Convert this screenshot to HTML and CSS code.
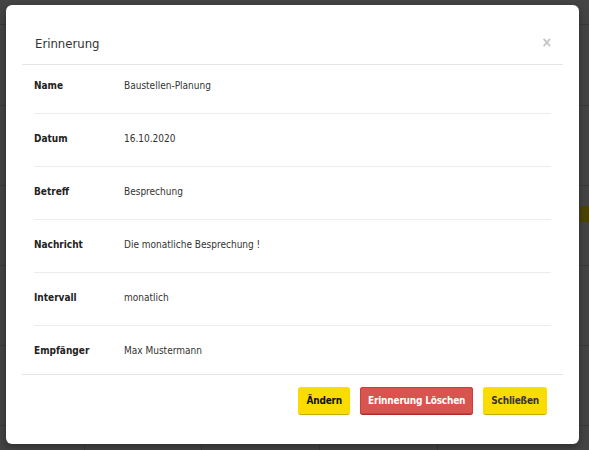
FILE: index.html
```html
<!DOCTYPE html>
<html lang="de">
<head>
<meta charset="utf-8">
<title>Erinnerung</title>
<link rel="stylesheet" href="styles.css">
</head>
<body>
<div class="backdrop">
  <div class="modal">
    <div class="modal-header">
      <h4 class="modal-title">Erinnerung</h4>
      <span class="close">&times;</span>
    </div>
    <div class="modal-body">
      <div class="row first"><div class="label">Name</div><div class="value">Baustellen-Planung</div></div>
      <div class="row"><div class="label">Datum</div><div class="value">16.10.2020</div></div>
      <div class="row"><div class="label">Betreff</div><div class="value">Besprechung</div></div>
      <div class="row"><div class="label">Nachricht</div><div class="value">Die monatliche Besprechung !</div></div>
      <div class="row"><div class="label">Intervall</div><div class="value">monatlich</div></div>
      <div class="row last"><div class="label">Empfänger</div><div class="value">Max Mustermann</div></div>
    </div>
    <div class="modal-footer">
      <button class="btn btn-yellow">Ändern</button>
      <button class="btn btn-red">Erinnerung Löschen</button>
      <button class="btn btn-yellow btn-dark-text">Schließen</button>
    </div>
  </div>
</div>
</body>
</html>
```
FILE: styles.css
```css
html, body {
  margin: 0;
  padding: 0;
}
body {
  width: 589px;
  height: 450px;
  overflow: hidden;
  font-family: "DejaVu Sans", sans-serif;
  font-stretch: condensed;
  background-color: #444444;
  background-image:
    linear-gradient(#4b4400, #4b4400),
    linear-gradient(to bottom, transparent 24px, #393939 24px, #393939 25px, transparent 25px,
      transparent 105px, #393939 105px, #393939 106px, transparent 106px,
      transparent 185px, #393939 185px, #393939 186px, transparent 186px,
      transparent 265px, #393939 265px, #393939 266px, transparent 266px,
      transparent 345px, #393939 345px, #393939 346px, transparent 346px,
      transparent 425px, #393939 425px, #393939 426px, transparent 426px),
    linear-gradient(to right, transparent 84px, #393939 84px, #393939 85px, transparent 85px,
      transparent 201px, #393939 201px, #393939 202px, transparent 202px,
      transparent 319px, #393939 319px, #393939 320px, transparent 320px,
      transparent 437px, #393939 437px, #393939 438px, transparent 438px);
  background-size: 10px 16px, 100% 100%, 100% 6px;
  background-position: 580px 206px, 0 0, 0 444px;
  background-repeat: no-repeat;
}
.backdrop {
  padding: 5px 0 0 6px;
}
.modal {
  width: 573px;
  height: 439px;
  background: #ffffff;
  border-radius: 6px;
  box-shadow: 0 3px 9px rgba(0, 0, 0, 0.35);
  box-sizing: border-box;
}
.modal-header {
  margin: 0 16px;
  height: 60px;
  border-bottom: 1px solid #e5e5e5;
  display: flex;
  align-items: flex-start;
  justify-content: space-between;
  padding: 30px 11px 0 13px;
  box-sizing: border-box;
}
.modal-title {
  margin: 0;
  font-size: 13px;
  font-weight: normal;
  color: #333333;
  line-height: 18px;
}
.close {
  font-size: 14px;
  font-weight: bold;
  color: #c4c4c4;
  line-height: 16px;
  margin-top: -1px;
}
.modal-body {
  margin: 0 28px;
}
.row {
  display: grid;
  grid-template-columns: 90px 1fr;
  padding: 18px 0 21px;
  border-top: 1px solid #ececec;
  font-size: 10px;
  line-height: 13px;
  color: #333333;
}
.row.first {
  border-top: none;
  padding-top: 14px;
}
.row.last {
  padding-bottom: 17px;
}
.label {
  font-weight: bold;
  color: #222222;
}
.value {
  color: #333333;
}
.modal-footer {
  margin: 0 16px;
  border-top: 1px solid #e5e5e5;
  padding: 12px 16px 0 0;
  display: flex;
  justify-content: flex-end;
  gap: 10px;
}
.btn {
  font-family: inherit;
  font-stretch: inherit;
  font-size: 10px;
  letter-spacing: -0.2px;
  font-weight: bold;
  height: 28px;
  padding: 0 8px;
  border: none;
  border-radius: 3px;
  cursor: pointer;
}
.btn-yellow {
  background: #fbdc00;
  color: #111111;
  border-bottom: 1px solid #c8ae00;
}
.btn-dark-text {
  color: #333333;
}
.btn-red {
  background: #d9534f;
  color: #ffffff;
  border-bottom: 1px solid #ac2925;
  box-shadow: inset 0 0 0 1px #c9403b;
}
```
